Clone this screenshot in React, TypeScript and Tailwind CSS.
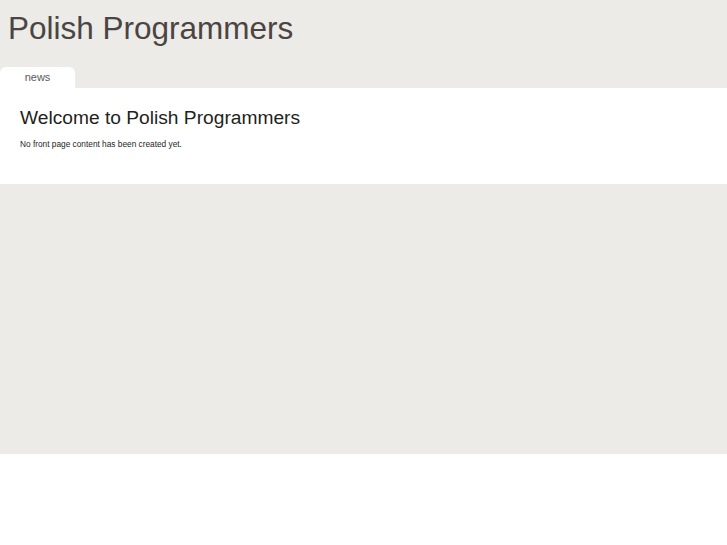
export default function App() {
  return (
    <div className="w-[727px] h-[545px] bg-white" style={{ fontFamily: '"Liberation Sans", Arial, sans-serif' }}>
      <div className="bg-[#ecebe7] h-[88px] flex flex-col">
        <h1 className="text-[31.5px] leading-none text-[#4a4542] pl-[8px] pt-[13px] h-[67px]">Polish Programmers</h1>
        <div className="flex">
          <div className="w-[75px] h-[21px] bg-white rounded-t-[6px] text-[11px] text-[#5a5a5a] flex items-center justify-center">news</div>
        </div>
      </div>
      <div className="bg-white h-[96px] pl-[20px] pt-[20px]">
        <h2 className="text-[19.2px] leading-none text-[#231f1c]">Welcome to Polish Programmers</h2>
        <p className="text-[8.3px] leading-none text-[#231f1c] mt-[13px]">No front page content has been created yet.</p>
      </div>
      <div className="bg-[#ecebe7] h-[270px]"></div>
    </div>
  );
}
